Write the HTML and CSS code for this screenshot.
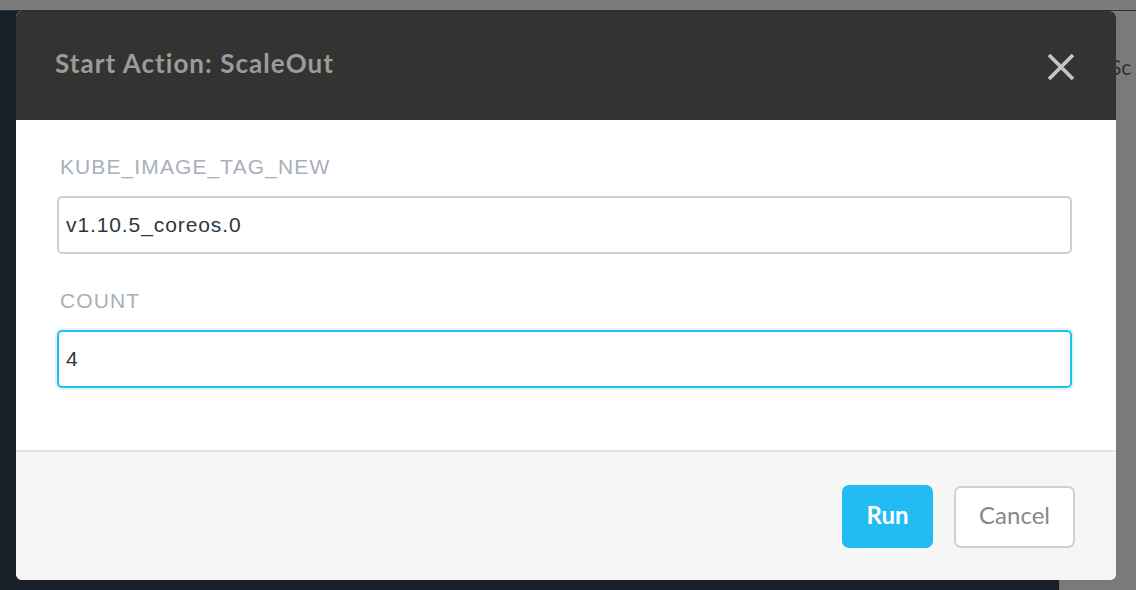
FILE: index.html
```html
<!DOCTYPE html>
<html>
<head>
<meta charset="utf-8">
<link rel="stylesheet" href="styles.css">
</head>
<body>
<div class="backdrop">
  <div class="topstrip"></div>
  <div class="under">
    <div class="main-dark"></div>
    <div class="side-panel"><span class="side-text">Sc</span></div>
  </div>
</div>
<div class="modal">
  <div class="modal-header">
    <h2 class="modal-title">Start Action: ScaleOut</h2>
    <button class="close" aria-label="Close">
      <svg width="28" height="28" viewBox="0 0 28 28"><path d="M2 2 L26 26 M26 2 L2 26" stroke="#c4c4c4" stroke-width="3.8" stroke-linecap="butt"/></svg>
    </button>
  </div>
  <div class="modal-body">
    <div class="field">
      <label class="label">KUBE_IMAGE_TAG_NEW</label>
      <div class="input">v1.10.5_coreos.0</div>
    </div>
    <div class="field">
      <label class="label">COUNT</label>
      <div class="input focus">4</div>
    </div>
  </div>
  <div class="modal-footer">
    <button class="btn btn-primary">Run</button>
    <button class="btn btn-default">Cancel</button>
  </div>
</div>
</body>
</html>
```

FILE: styles.css
```css
html, body {
  margin: 0;
  padding: 0;
  width: 1136px;
  height: 590px;
  overflow: hidden;
  background: #1a2129;
  font-family: "Liberation Sans", Arial, sans-serif;
}
.backdrop {
  display: flex;
  flex-direction: column;
  height: 590px;
}
.topstrip {
  height: 10px;
  background: #7c7c7c;
  border-bottom: 1px solid #2a3038;
}
.under {
  flex: 1;
  display: flex;
}
.main-dark {
  flex: 1;
  background: #18202a;
}
.side-panel {
  width: 76px;
  background: #7a7a7a;
  border-left: 1px solid #6f6f6f;
  position: relative;
  overflow: hidden;
}
.side-text {
  position: absolute;
  left: 50px;
  top: 44px;
  font-family: Lato, sans-serif;
  font-size: 21px;
  line-height: 24px;
  color: #2f2f33;
}
.modal {
  position: absolute;
  left: 16px;
  top: 11px;
  width: 1100px;
  height: 569px;
  background: #fff;
  border-radius: 6px;
  overflow: hidden;
  display: flex;
  flex-direction: column;
}
.modal-header {
  height: 109px;
  background: #333431;
  display: flex;
  align-items: center;
  justify-content: space-between;
  padding: 0 41px 0 39px;
  box-sizing: border-box;
}
.modal-title {
  margin: 0;
  font-family: Lato, sans-serif;
  font-weight: 700;
  font-size: 26px;
  line-height: 30px;
  color: #9b9b9b;
  letter-spacing: 1.05px;
  margin-top: -6px;
}
.close {
  background: none;
  border: 0;
  padding: 0;
  width: 28px;
  height: 28px;
  display: block;
  margin-top: 2px;
}
.close svg { display: block; }
.modal-body {
  height: 330px;
  padding: 36px 44px 0 41px;
  box-sizing: border-box;
  display: flex;
  flex-direction: column;
  gap: 36px;
}
.field {
  display: flex;
  flex-direction: column;
  gap: 18px;
}
.label {
  font-size: 21px;
  color: #a9afba;
  line-height: 22px;
  padding-left: 3px;
  letter-spacing: 1.1px;
}
.input {
  height: 58px;
  box-sizing: border-box;
  border: 2px solid #cdcfd3;
  border-radius: 5px;
  padding: 0 7px;
  display: flex;
  align-items: center;
  font-size: 21px;
  color: #2f3640;
  letter-spacing: 0.9px;
}
.input.focus {
  border-color: #22bdf2;
  box-shadow: 0 0 0 2px #dff3fb;
}
.modal-footer {
  flex: 1;
  background: #f6f6f6;
  border-top: 2px solid #e5e5e5;
  display: flex;
  justify-content: flex-end;
  align-items: flex-start;
  gap: 21px;
  padding: 33px 41px 0 0;
}
.btn {
  height: 63px;
  border-radius: 7px;
  font-family: Lato, sans-serif;
  font-size: 24px;
  cursor: pointer;
  box-sizing: border-box;
  padding: 0 0 5px;
}
.btn-primary {
  width: 91px;
  background: #22bcf2;
  color: #fff;
  border: 0;
  font-weight: 700;
}
.btn-default {
  width: 121px;
  background: #fff;
  color: #85888e;
  border: 2px solid #d0d0d0;
  margin-top: 1px;
  height: 62px;
}
```
